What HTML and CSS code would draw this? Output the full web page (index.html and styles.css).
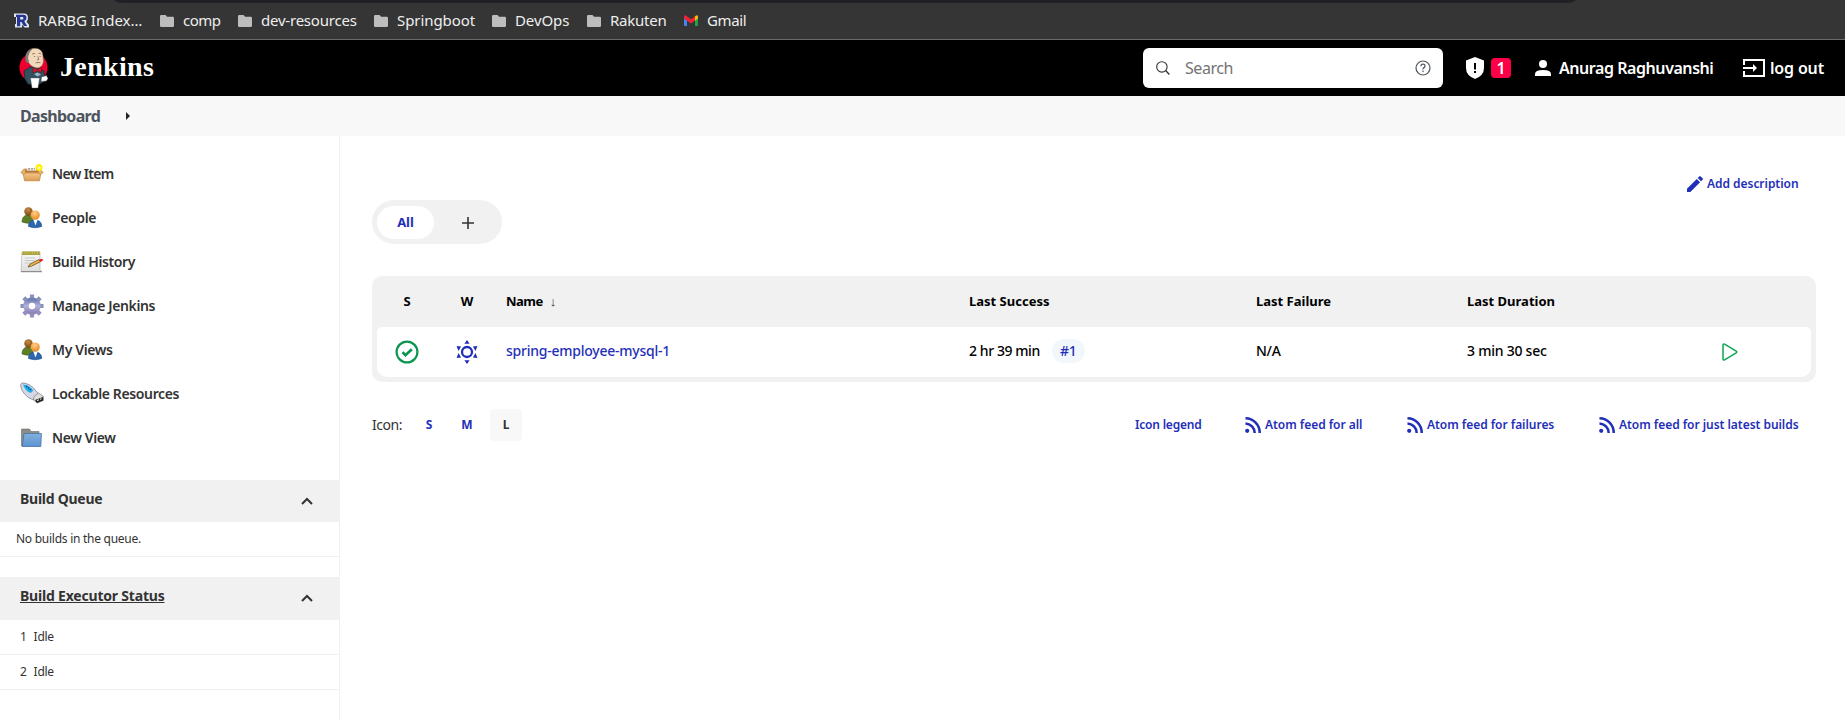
FILE: index.html
```html
<!DOCTYPE html>
<html lang="en">
<head>
<meta charset="utf-8">
<title>Dashboard [Jenkins]</title>
<link rel="stylesheet" href="styles.css">
</head>
<body>
<svg class="defs" width="0" height="0">
  <defs>
    <linearGradient id="box" x1="0" y1="0" x2="0" y2="1"><stop offset="0" stop-color="#f3c98c"/><stop offset="1" stop-color="#dc9a4e"/></linearGradient>
    <radialGradient id="brown" cx=".45" cy=".3" r=".7"><stop offset="0" stop-color="#c98a45"/><stop offset="1" stop-color="#7a4a12"/></radialGradient>
    <radialGradient id="orange" cx=".45" cy=".3" r=".7"><stop offset="0" stop-color="#ffd08a"/><stop offset="1" stop-color="#e98a1e"/></radialGradient>
    <linearGradient id="gear" x1="0" y1="0" x2="0" y2="1"><stop offset="0" stop-color="#6f80b4"/><stop offset=".5" stop-color="#b3b3dc"/><stop offset="1" stop-color="#8f86bc"/></linearGradient>
    <linearGradient id="folder" x1="0" y1="0" x2="0" y2="1"><stop offset="0" stop-color="#82b0de"/><stop offset="1" stop-color="#5c93d0"/></linearGradient>
    <linearGradient id="sheet" x1="0" y1="0" x2="0" y2="1"><stop offset="0" stop-color="#fafafa"/><stop offset="1" stop-color="#dcdcdc"/></linearGradient>
  </defs>
  <symbol id="bm-folder" viewBox="0 0 14 12"><path fill="#bdbdbd" d="M1.300 0h4.200l1.600 1.700h5.600q1.300 0 1.300 1.300v7.700q0 1.300-1.300 1.300H1.300Q0 12 0 10.700V1.300Q0 0 1.300 0z"/></symbol>
  <symbol id="people" viewBox="0 0 24 24">
    <path d="M2 16c0-4.500 2.500-7 6-7s5 2 5 7q-5 2.600-11 0z" fill="#5c7f26" stroke="#3d5c12" stroke-width=".6"/>
    <circle cx="8.500" cy="5.500" r="4.200" fill="url(#brown)"/>
    <path d="M8.500 20.500c0-4.500 2.500-6.500 6.500-6.500s6.700 2 6.700 6.500q-6.500 2.600-13.200 0z" fill="#2e66ae" stroke="#1d4a88" stroke-width=".6"/>
    <path d="M13.500 14l2 5.500 2-5.500z" fill="#fff"/><circle cx="15.200" cy="9" r="4.600" fill="url(#orange)"/>
  </symbol>
  <symbol id="rss" viewBox="0 0 16 16"><g fill="none" stroke="#1f2fb8" stroke-width="2.500"><path d="M.5 1.300A14.500 14.500 0 0 1 14.700 16M.5 6.500A9.500 9.500 0 0 1 9.700 16"/></g><circle cx="2.200" cy="13.800" r="2.100" fill="#1f2fb8"/></symbol>
  <symbol id="chevron" viewBox="0 0 12 8"><path d="M1 7l5-5 5 5" fill="none" stroke="#333" stroke-width="2"/></symbol>
</svg>

<nav class="bookmarks">
  <div class="omnibox"></div>
  <a class="bm bm-rarbg"><svg width="15" height="15" viewBox="0 0 15 15"><path d="M0 .5h10q4 0 4 4.300 0 2.500-1.500 4l2.500 3v2.700h-4.500L8 11.500v3H1V11h1V4H0z" fill="#dfe5f5"/><path d="M2 1.800h7.500q3 0 3 3 0 2.600-2.300 3.300l3 5h-3.300L7.400 9H6.200v4.200H3V4H2zM6.200 4v2.600h2.200q1-.1 1-1.300T8.400 4z" fill="#26358f"/></svg><span>RARBG Index…</span></a>
  <a class="bm bm-comp"><svg width="14" height="12"><use href="#bm-folder"/></svg><span>comp</span></a>
  <a class="bm bm-dev"><svg width="14" height="12"><use href="#bm-folder"/></svg><span>dev-resources</span></a>
  <a class="bm bm-spring"><svg width="14" height="12"><use href="#bm-folder"/></svg><span>Springboot</span></a>
  <a class="bm bm-devops"><svg width="14" height="12"><use href="#bm-folder"/></svg><span>DevOps</span></a>
  <a class="bm bm-rakuten"><svg width="14" height="12"><use href="#bm-folder"/></svg><span>Rakuten</span></a>
  <a class="bm bm-gmail"><svg width="14" height="11" viewBox="0 0 14 11"><path d="M0 2.500h3V11H1q-1 0-1-1z" fill="#4285f4"/><path d="M11 2.500h3V10q0 1-1 1h-2z" fill="#1ea446"/><path d="M11 1.300Q14-1 14 2v1.500L11 5.800z" fill="#fbbc04"/><path d="M0 3.500V2Q0-1 3 1.300L7 4.300l4-3v4.500L7 8.600 3 5.800z" fill="#ea2434"/></svg><span>Gmail</span></a>
</nav>

<header class="header">
  <a class="brand">
    <svg width="30" height="42" viewBox="0 0 30 42">
      <ellipse cx="14.500" cy="20.500" rx="14" ry="14.500" fill="#f0002f"/>
      <path d="M5 24l6-4 8 1 6 3 1 10-7 4-10-1-3-5z" fill="#335061" stroke="#1b2a33" stroke-width=".8"/>
      <path d="M7.500 13Q6 2 15.500 1.200 23.500 1 24 9l.5 5.500Q23.500 20.500 18.500 21q-4.500 0-8-4z" fill="#f3d9bb" stroke="#6b5a4c" stroke-width=".5"/>
      <path d="M6.300 12Q6 5 11.500 2.200q1.500-.3 1 .5Q9.500 5 9 9l-.3 2.500 1 3-1.200 1.500Q6.300 15 6.300 12z" fill="#8a7f7a" stroke="#444" stroke-width=".4"/>
      <path d="M13 7.200q1.500-1.200 3-.6M19.500 6.500q1.500-.6 2.700.5M15 9.500h1.200M20.500 9.500h1.200M18.800 9.500l1 3-1.800.5M16.500 16q2.500-1.200 5-.2" stroke="#7c5f4b" stroke-width=".8" fill="none"/>
      <path d="M14 20.500l4.500 2 4-2.300v5.300l-4-1.800L14 26z" fill="#e0122c" stroke="#311" stroke-width=".4"/>
      <path d="M15 27l3.500-1.500 3.500 2-3.500 2z" fill="#9fb4bf"/>
      <path d="M11.500 31h9l-1.500 10h-6z" fill="#fff" stroke="#555" stroke-width=".4"/>
      <path d="M22.500 30l5-1.500 1.500 3-1.500 2.500-5.500.5z" fill="#fff" stroke="#444" stroke-width=".5"/>
    </svg>
    <span>Jenkins</span>
  </a>
  <div class="search">
    <svg width="14" height="14" viewBox="0 0 14 14" fill="none" stroke="#333" stroke-width="1.100"><circle cx="5.900" cy="5.900" r="5.200"/><path d="M9.600 9.600l3.800 3.800" stroke-width="1.400"/></svg>
    <span class="search-text">Search</span>
    <svg width="16" height="16" viewBox="0 0 16 16" fill="none" stroke="#4d545d" stroke-width="1.200"><circle cx="8" cy="8" r="7"/><path d="M5.900 6.200Q6 4.200 8 4.200t2.100 1.800q0 1-1.100 1.600T8 9.400"/><path d="M8 10.500v1.500"/></svg>
  </div>
  <div class="alert">
    <svg width="18" height="22" viewBox="0 0 18 22"><path d="M9 0l9 3.500V11q0 7.500-9 11Q0 18.500 0 11V3.500z" fill="#fff"/><path d="M8 6h2v6.500H8zM8 14h2v2H8z" fill="#000"/></svg>
    <span class="alert-count">1</span>
  </div>
  <a class="user"><svg width="16" height="16" viewBox="0 0 16 16" fill="#fff"><circle cx="8" cy="4" r="4"/><path d="M0 16v-2q0-4 8-4t8 4v2z"/></svg><span>Anurag Raghuvanshi</span></a>
  <a class="logout"><svg width="22" height="18" viewBox="0 0 22 18" fill="none" stroke="#fff" stroke-width="2"><path d="M1 6V1h20v16H1v-5M0 9h12"/><path d="M10 5l4 4-4 4z" fill="#fff" stroke="none"/></svg><span>log out</span></a>
</header>

<div class="breadcrumbs"><span>Dashboard</span><i class="crumb-arrow"></i></div>

<div class="page">
  <aside class="side">
    <ul class="tasks">
      <li class="short"><svg width="24" height="24" viewBox="0 0 24 24"><path d="M3 11h18l-1.500 7.800h-15z" fill="url(#box)" stroke="#b87a35" stroke-width=".6"/><path d="M4 7L.8 10.500l3 2.300 2-2.300h12.400l2 2.300 3-2.300L20 7z" fill="#e8b068" stroke="#b87a35" stroke-width=".6"/><path d="M5 7.500h13l1 3H5z" fill="#b97c3a"/><path d="M7 6.500h9v2H7z" fill="#fff"/><path d="M8 7h7" stroke="#666" stroke-dasharray="2 1"/><circle cx="19" cy="5.500" r="3.500" fill="#fff200"/><circle cx="19" cy="5.800" r="1.500" fill="#fffbb0"/></svg><span>New Item</span></li>
      <li><svg width="24" height="24"><use href="#people"/></svg><span>People</span></li>
      <li><svg width="24" height="24" viewBox="0 0 24 24"><path d="M2 2h18v18l2 2H1z" fill="url(#sheet)" stroke="#aaa" stroke-width=".6"/><path d="M2 1.500h18V5H2z" fill="#a9a236"/><path d="M2 3h18" stroke="#d9d38a" stroke-dasharray="1 1.500"/><path d="M4.500 8h11M4.500 10.500h10M4.500 13h6" stroke="#c9c9c9"/><path d="M1 21.500h21" stroke="#8e8e8e"/><path d="M8 17l2-3 9-4.500 1.500 2.200-9.200 4.500z" fill="#e9b44a" stroke="#5b3d10" stroke-width=".7"/><path d="M19 9.700l2.500-1 2 1.200-3 2.200z" fill="#df1f2d"/></svg><span>Build History</span></li>
      <li><svg width="24" height="24" viewBox="0 0 24 24"><circle cx="12" cy="12" r="6" fill="none" stroke="url(#gear)" stroke-width="5.500"/><g stroke="#8490bd" stroke-width="4.200"><path d="M12 .5V4M3.800 3.800l2.800 2.800M.5 12h3.200M20.300 12h3.200M17.400 6.600l2.800-2.800"/><path stroke="#958dbf" d="M3.800 20.200l2.800-2.800M12 20v3.500M17.400 17.400l2.800 2.800"/></g></svg><span>Manage Jenkins</span></li>
      <li><svg width="24" height="24"><use href="#people"/></svg><span>My Views</span></li>
      <li><svg width="24" height="24" viewBox="0 0 24 24"><path d="M.5 3Q1 .5 4 1q6 1 9.500 5l5 6-5 6Q8 16 4.500 12 1 8 .5 3z" fill="#d6d8e6" stroke="#7f8296" stroke-width=".8"/><path d="M3 2.500q6 0 10.500 6l-3 2.500Q5 9 3 2.500z" fill="#22aee8"/><path d="M6 4l5 4" stroke="#0a4a84" stroke-width="1.500" stroke-dasharray="1.500 1"/><path d="M14 14.500l4.500-3.500 5 3.500v4L17 21l-3.500-3z" fill="#dedede" stroke="#666" stroke-width=".6"/><path d="M15 18l8-3v3.500l-6 2.500z" fill="#222"/><path d="M17 18.500l2-.7M20 17.300l1.500-.5" stroke="#fff"/></svg><span>Lockable Resources</span></li>
      <li><svg width="24" height="24" viewBox="0 0 24 24"><path d="M1.500 3h8L11 5.500h8V20H1.500z" fill="#8a8d88" stroke="#6b6d69" stroke-width=".6"/><path d="M4 7.500h17.500l-.7 13H2.300z" fill="url(#folder)" stroke="#3f6fa8" stroke-width=".7"/></svg><span>New View</span></li>
    </ul>
    <section class="pane queue">
      <h2><span>Build Queue</span><svg width="12" height="8"><use href="#chevron"/></svg></h2>
      <p>No builds in the queue.</p>
    </section>
    <section class="pane executors">
      <h2><span class="under">Build Executor Status</span><svg width="12" height="8"><use href="#chevron"/></svg></h2>
      <div class="exec"><span>1</span><span>Idle</span></div>
      <div class="exec"><span>2</span><span>Idle</span></div>
    </section>
  </aside>

  <main class="main">
    <a class="link describe"><svg width="16" height="16" viewBox="0 0 16 16" fill="#1f2fb8"><path d="M0 12.700L9.800 2.900l3.300 3.300L3.300 16H0zM10.700 2L12.300.4q.7-.7 1.400 0l1.900 1.900q.7.700 0 1.400L14 5.300z"/></svg><span>Add description</span></a>
    <div class="tabs"><span class="tab-on">All</span><span class="tab-add"><svg width="12" height="12" viewBox="0 0 12 12"><path d="M6 0v12M0 6h12" stroke="#333" stroke-width="1.600"/></svg></span></div>
    <div class="table">
      <div class="row head">
        <span class="c">S</span><span class="c">W</span><span><span class="sorted">Name</span><i class="sort">↓</i></span><span>Last Success</span><span>Last Failure</span><span>Last Duration</span><span></span>
      </div>
      <div class="row job">
        <span class="c"><svg width="24" height="24" viewBox="0 0 24 24" fill="none" stroke="#0b9650"><circle cx="12" cy="12" r="10.400" stroke-width="2.200"/><path d="M7.500 12.200l3 3 6.300-6" stroke-width="2.700"/></svg></span>
        <span class="c"><svg width="24" height="24" viewBox="0 0 24 24" fill="#1f2fb8"><circle cx="12" cy="12" r="5" fill="none" stroke="#1f2fb8" stroke-width="2.300"/><path d="M12 0l2.600 3.700H9.400zM12 24l2.600-3.700H9.400zM1.600 6l4.500.4-2.600 4.500zM22.400 6l-4.500.4 2.600 4.500zM1.600 18l4.500-.4-2.600-4.500zM22.400 18l-4.500-.4 2.600-4.500z"/></svg></span>
        <span class="text name">spring-employee-mysql-1</span>
        <span class="text ago"><span class="time">2 hr 39 min</span><span class="num">#1</span></span>
        <span class="text">N/A</span>
        <span class="text">3 min 30 sec</span>
        <span class="run"><svg width="16" height="18" viewBox="0 0 16 18"><path d="M1 2.200Q1 .4 2.600 1.200L14.200 8Q15.500 9 14.200 10L2.600 16.800Q1 17.600 1 15.800z" fill="none" stroke="#0ea555" stroke-width="1.500"/></svg></span>
      </div>
    </div>
    <div class="foot">
      <span class="icon-label">Icon:</span><a class="size">S</a><a class="size">M</a><a class="size size-on">L</a>
      <div class="feeds">
        <a class="link legend"><span>Icon legend</span></a>
        <a class="link f1"><svg width="16" height="16"><use href="#rss"/></svg><span>Atom feed for all</span></a>
        <a class="link f2"><svg width="16" height="16"><use href="#rss"/></svg><span>Atom feed for failures</span></a>
        <a class="link f3"><svg width="16" height="16"><use href="#rss"/></svg><span>Atom feed for just latest builds</span></a>
      </div>
    </div>
  </main>
</div>
</body>
</html>
```
FILE: styles.css
```css
* { box-sizing: border-box; }
body { margin: 0; height: 720px; overflow: hidden; background: #fff; color: #333; font-family: "Noto Sans", "Open Sans", sans-serif; font-size: 14px; white-space: nowrap; }
svg { display: block; flex: none; }
.defs { position: absolute; }

.bookmarks { position: relative; display: flex; height: 40px; padding: 3px 0 1px 14px; background: #353535; border-bottom: 1px solid #6a6a6a; color: #eee; font-size: 15px; letter-spacing: -.22px; }
.omnibox { position: absolute; left: 110px; top: -20px; width: 1470px; height: 23px; border-radius: 12px; background: #202124; }
.bm { display: flex; align-items: center; gap: 9px; }
.bm span { padding-bottom: 2px; }
.bm-rarbg { width: 146px; gap: 9px; letter-spacing: 0; }
.bm-comp { width: 78px; letter-spacing: -.5px; }
.bm-dev { width: 136px; }
.bm-spring { width: 118px; letter-spacing: -.08px; }
.bm-devops { width: 95px; letter-spacing: -.1px; }
.bm-rakuten { width: 97px; letter-spacing: -.25px; }
.bm-gmail { letter-spacing: -.4px; }

.header { display: flex; align-items: center; height: 56px; padding-left: 19px; background: #000; color: #fff; font-size: 16px; font-weight: 600; }
.brand { display: flex; align-items: center; gap: 11px; width: 1124px; font: bold 28px/32px "Liberation Serif", serif; letter-spacing: .35px; }
.brand span { padding-bottom: 3px; }
.search { display: flex; align-items: center; width: 300px; height: 40px; padding: 0 12px 0 13px; border-radius: 6px; background: #fff; color: #737373; font-weight: 400; letter-spacing: -.44px; }
.search-text { flex: 1; padding: 0 0 1px 15px; }
.alert { display: flex; align-items: center; gap: 7px; width: 92px; padding-left: 23px; }
.alert-count { width: 20px; height: 20px; border-radius: 4px; background: #ff0048; line-height: 20px; text-align: center; }
.user { display: flex; align-items: center; gap: 8px; width: 208px; letter-spacing: -.44px; }
.logout { display: flex; align-items: center; gap: 5px; letter-spacing: -.17px; }

.breadcrumbs { display: flex; align-items: center; height: 40px; padding: 0 0 1px 20px; background: #f8f8f8; color: #4d545d; font-size: 16px; font-weight: 700; letter-spacing: -.7px; }
.breadcrumbs span { width: 106px; }
.crumb-arrow { border: 4px solid transparent; border-left-color: #222; border-right: 0; }

.page { display: flex; height: 584px; }
.side { width: 340px; border-right: 1px solid #f1f1f1; }
.tasks { margin: 0; padding: 16px 0 0 20px; list-style: none; font-weight: 600; letter-spacing: -.38px; }
.tasks li { display: flex; align-items: center; gap: 8px; height: 44px; }
.tasks span { padding-bottom: 2px; }
.tasks .short { letter-spacing: -.65px; }
.queue { margin-top: 20px; }
.executors { margin-top: 20px; }
.pane { font-size: 12px; letter-spacing: -.26px; }
.pane h2 { display: flex; justify-content: space-between; align-items: center; height: 42px; margin: 0; padding: 0 26px 4px 20px; background: #f1f1f1; font-size: 14px; font-weight: 700; }
.pane h2 span { padding-bottom: 2px; }
.pane h2 svg { margin-top: 3px; }
.executors h2 { height: 43px; letter-spacing: -.2px; }
.under { text-decoration: underline; }
.queue p { height: 35px; margin: 0; padding-left: 16px; line-height: 34px; border-bottom: 1px solid #f1f1f1; }
.exec { display: flex; gap: 7px; height: 35px; padding-left: 20px; line-height: 33px; border-bottom: 1px solid #f1f1f1; }

.main { flex: 1; padding: 40px 29px 0 32px; }
.link { display: flex; align-items: center; gap: 4px; color: #1f2fb8; font-size: 12px; font-weight: 600; letter-spacing: -.04px; }
.link span { padding-bottom: 1px; }
.describe { height: 16px; margin-left: 1315px; }
.tabs { display: flex; align-items: center; width: 130px; height: 44px; margin-top: 8px; padding: 1px 5px 0; border-radius: 22px; background: #f1f1f1; }
.tab-on { width: 57px; height: 33px; border-radius: 17px; background: #fff; color: #1f2fb8; font-size: 13px; font-weight: 700; line-height: 32px; text-align: center; }
.tab-add { margin-left: 28px; }
.table { width: 1444px; height: 106px; margin-top: 32px; padding: 0 5px 5px; border-radius: 10px; background: #f1f1f1; color: #000; }
.row { display: grid; grid-template-columns: 60px 60px 463px 287px 211px 255px 1fr; align-items: center; }
.head { height: 51px; padding-bottom: 2px; font-size: 13px; font-weight: 700; }
.job { height: 50px; border-radius: 5px 5px 10px 10px; background: #fff; font-weight: 500; letter-spacing: -.24px; }
.c { display: flex; justify-content: center; }
.row > :nth-child(n+3) { padding-left: 9px; }
.text { padding-bottom: 3px; }
.sorted { letter-spacing: -.5px; }
.sort { margin-left: 7px; color: #333; font-style: normal; font-weight: 400; }
.name { color: #1f2fb8; }
.ago { display: flex; align-items: center; gap: 12px; }
.time { letter-spacing: -.42px; }
.num { width: 33px; height: 24px; border-radius: 12px; background: #f2f7fc; color: #1f2fb8; line-height: 23px; text-align: center; }
.foot { display: flex; align-items: center; height: 32px; margin-top: 27px; }
.icon-label { width: 41px; padding-bottom: 2px; letter-spacing: -.47px; }
.size { width: 32px; height: 32px; margin-right: 6px; color: #1f2fb8; font-size: 12px; font-weight: 700; line-height: 31px; text-align: center; }
.size-on { margin: 0 0 0 1px; border-radius: 4px; background: #f8f8f8; color: #333; }
.feeds { display: flex; align-items: center; margin-left: 613px; }
.legend { width: 110px; letter-spacing: -.2px; }
.f1 { width: 162px; }
.f2 { width: 192px; }
```
